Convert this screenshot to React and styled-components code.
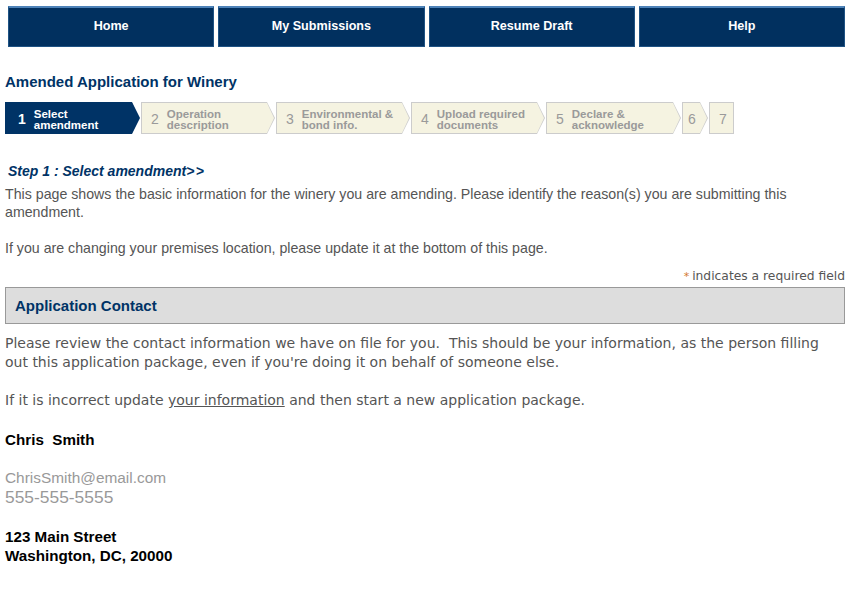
import React from "react";
import styled, { createGlobalStyle, css } from "styled-components";

const GlobalStyle = createGlobalStyle`
  body {
    margin: 0;
    background: #fff;
    font-family: "Liberation Sans", Arial, sans-serif;
  }
`;

const navy = "#003366";

const NavBar = styled.nav`
  display: grid;
  grid-template-columns: repeat(4, 1fr);
  gap: 4px;
  padding: 6px 9px 0 8px;
`;

const NavButton = styled.a`
  display: flex;
  align-items: center;
  justify-content: center;
  height: 41px;
  box-sizing: border-box;
  padding-bottom: 2px;
  background: #01305f;
  border: 1px solid #1f5384;
  border-top: 2px solid #4d82b8;
  color: #fff;
  font-weight: bold;
  font-size: 12.6px;
  text-decoration: none;
  cursor: pointer;
`;

const Main = styled.main`
  padding: 0 9px 0 5px;
`;

const Title = styled.h1`
  margin: 26px 0 0;
  font-size: 15px;
  line-height: 18px;
  color: ${navy};
`;

const Steps = styled.ol`
  display: flex;
  list-style: none;
  margin: 11px 0 0;
  padding: 0;
`;

const Step = styled.li`
  position: relative;
  display: flex;
  align-items: center;
  gap: 8px;
  box-sizing: border-box;
  height: 32px;
  width: ${(p) => p.$width}px;
  padding-left: ${(p) => p.$pad}px;
  margin-right: ${(p) => (p.$last ? 0 : 9)}px;
  background: ${(p) => (p.$active ? navy : "#f5f3e1")};
  border: 1px solid ${(p) => (p.$active ? navy : "#cccccc")};
  color: ${(p) => (p.$active ? "#fff" : "#9a9a9a")};

  ${(p) =>
    !p.$last &&
    css`
      border-right: none;
      &::before,
      &::after {
        content: "";
        position: absolute;
        left: 100%;
        width: 0;
        height: 0;
        border-style: solid;
        border-color: transparent;
      }
      &::before {
        top: -1px;
        border-width: 16px 0 16px 8px;
        border-left-color: ${p.$active ? navy : "#cccccc"};
      }
      &::after {
        top: 0;
        border-width: 15px 0 15px 7px;
        border-left-color: ${p.$active ? navy : "#f5f3e1"};
      }
    `}
`;

const StepNum = styled.span`
  font-size: 14px;
  font-weight: ${(p) => (p.$active ? "bold" : "normal")};
  margin-top: 1px;
`;

const StepLabel = styled.span`
  margin-top: 4px;
  font-size: 11.5px;
  font-weight: bold;
  line-height: 11px;
  white-space: nowrap;
`;

const StepHeading = styled.h2`
  margin: 29px 0 0 3px;
  font-size: 14px;
  line-height: 16px;
  font-style: italic;
  font-weight: bold;
  color: ${navy};
`;

const Arrows = styled.span`
  letter-spacing: 1.5px;
`;

const Para = styled.p`
  margin: ${(p) => p.$top || 0}px 0 0;
  font-size: 14.2px;
  line-height: 18px;
  color: #555;
`;

const Required = styled.div`
  margin-top: 11px;
  text-align: right;
  font-family: "DejaVu Sans", Verdana, sans-serif;
  font-size: 12.3px;
  line-height: 16px;
  color: #555;
`;

const Star = styled.span`
  color: #d2782d;
  font-size: 11px;
  margin-right: 3px;
`;

const Panel = styled.section`
  margin-top: 2px;
  height: 37px;
  box-sizing: border-box;
  display: flex;
  align-items: center;
  padding-left: 9px;
  background: #dddddd;
  border: 1px solid #999;
`;

const PanelTitle = styled.h3`
  margin: 0;
  font-size: 15px;
  color: ${navy};
`;

const Note = styled.p`
  margin: ${(p) => p.$top}px 0 0;
  padding-right: 12px;
  font-family: "DejaVu Sans", Verdana, sans-serif;
  font-size: 14px;
  line-height: 19px;
  color: #555;
`;

const Link = styled.a`
  color: #555;
  text-decoration: underline;
`;

const Strong = styled.div`
  margin-top: ${(p) => p.$top || 0}px;
  font-weight: bold;
  font-size: 15.2px;
  line-height: 19px;
  color: #000;
  white-space: pre;
`;

const Muted = styled.div`
  margin-top: ${(p) => p.$top || 0}px;
  font-size: ${(p) => p.$size}px;
  line-height: ${(p) => p.$lh}px;
  color: #999;
`;

const navItems = ["Home", "My Submissions", "Resume Draft", "Help"];

const steps = [
  { n: 1, label: ["Select", "amendment"], width: 127, pad: 12 },
  { n: 2, label: ["Operation", "description"], width: 126, pad: 9 },
  { n: 3, label: ["Environmental &", "bond info."], width: 126, pad: 9 },
  { n: 4, label: ["Upload required", "documents"], width: 126, pad: 9 },
  { n: 5, label: ["Declare &", "acknowledge"], width: 127, pad: 9 },
  { n: 6, label: null, width: 18, pad: 5 },
  { n: 7, label: null, width: 25, pad: 9 },
];

export default function App() {
  return (
    <>
      <GlobalStyle />
      <NavBar>
        {navItems.map((item) => (
          <NavButton key={item}>{item}</NavButton>
        ))}
      </NavBar>
      <Main>
        <Title>Amended Application for Winery</Title>
        <Steps>
          {steps.map((s, i) => (
            <Step
              key={s.n}
              $active={i === 0}
              $last={i === steps.length - 1}
              $width={s.width}
              $pad={s.pad}
            >
              <StepNum $active={i === 0}>{s.n}</StepNum>
              {s.label && (
                <StepLabel>
                  {s.label[0]}
                  <br />
                  {s.label[1]}
                </StepLabel>
              )}
            </Step>
          ))}
        </Steps>

        <StepHeading>
          Step 1 : Select amendment<Arrows>&gt;&gt;</Arrows>
        </StepHeading>
        <Para $top={6}>
          This page shows the basic information for the winery you are
          amending. Please identify the reason(s) you are submitting this
          amendment.
        </Para>
        <Para $top={18}>
          If you are changing your premises location, please update it at the
          bottom of this page.
        </Para>

        <Required>
          <Star>*</Star>indicates a required field
        </Required>
        <Panel>
          <PanelTitle>Application Contact</PanelTitle>
        </Panel>

        <Note $top={10}>
          Please review the contact information we have on file for you.{"\u00a0 "}This
          should be your information, as the person filling out this
          application package, even if you're doing it on behalf of someone
          else.
        </Note>
        <Note $top={19}>
          If it is incorrect update <Link>your information</Link> and then
          start a new application package.
        </Note>

        <Strong $top={20}>{"Chris  Smith"}</Strong>
        <Muted $top={19} $size={15.4} $lh={19}>
          ChrisSmith@email.com
        </Muted>
        <Muted $size={17.4} $lh={21}>
          555-555-5555
        </Muted>
        <Strong $top={19}>
          {"123 Main Street\nWashington, DC, 20000"}
        </Strong>
      </Main>
    </>
  );
}
